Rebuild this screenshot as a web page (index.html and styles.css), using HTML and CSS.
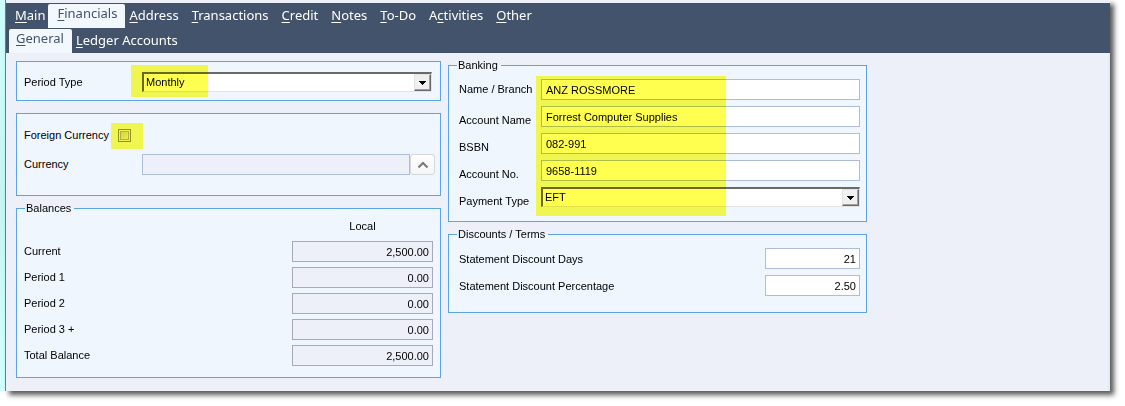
FILE: index.html
```html
<!DOCTYPE html>
<html lang="en">
<head>
    <meta charset="utf-8">
    <title>Financials</title>
    <link rel="stylesheet" href="styles.css">
</head>
<body>
    <div class="window">
        <nav class="tabs" aria-label="Sections">
            <a href="#main"><u>M</u>ain</a>
            <a href="#financials" class="active" aria-current="page"><u>F</u>inancials</a>
            <a href="#address"><u>A</u>ddress</a>
            <a href="#transactions"><u>T</u>ransactions</a>
            <a href="#credit"><u>C</u>redit</a>
            <a href="#notes"><u>N</u>otes</a>
            <a href="#todo"><u>T</u>o-Do</a>
            <a href="#activities">A<u>c</u>tivities</a>
            <a href="#other"><u>O</u>ther</a>
        </nav>
        <nav class="tabs subtabs" aria-label="Financials">
            <a href="#general" class="active" aria-current="page"><u>G</u>eneral</a>
            <a href="#ledger"><u>L</u>edger Accounts</a>
        </nav>

        <form class="content">
            <div class="column">
                <div class="panel period">
                    <div class="row">
                        <label for="period-type">Period Type</label>
                        <div class="dropdown">
                            <select id="period-type">
                                <option>Monthly</option>
                            </select>
                            <span class="drop-button">
                                <svg width="7" height="4" viewBox="0 0 7 4"><path d="M0 0h7v1H6v1H5v1H4v1H3V3H2V2H1V1H0z"/></svg>
                            </span>
                        </div>
                    </div>
                    <span class="highlight"></span>
                </div>

                <div class="panel currency">
                    <div class="row check-row">
                        <label for="foreign">Foreign Currency</label>
                        <span class="check">
                            <input type="checkbox" id="foreign">
                            <span class="highlight"></span>
                        </span>
                    </div>
                    <div class="row">
                        <label for="currency">Currency</label>
                        <input type="text" id="currency" class="readonly" readonly>
                        <button type="button" class="lookup" aria-label="Choose currency">
                            <svg width="12" height="8" viewBox="0 0 12 8"><path d="M1.5 6.5 6 2l4.5 4.5"/></svg>
                        </button>
                    </div>
                </div>

                <fieldset class="panel balances">
                    <legend>Balances</legend>
                    <div class="heading">Local</div>
                    <div class="row">
                        <label for="current">Current</label>
                        <input type="text" id="current" class="readonly" value="2,500.00" readonly>
                    </div>
                    <div class="row">
                        <label for="period1">Period 1</label>
                        <input type="text" id="period1" class="readonly" value="0.00" readonly>
                    </div>
                    <div class="row">
                        <label for="period2">Period 2</label>
                        <input type="text" id="period2" class="readonly" value="0.00" readonly>
                    </div>
                    <div class="row">
                        <label for="period3">Period 3 +</label>
                        <input type="text" id="period3" class="readonly" value="0.00" readonly>
                    </div>
                    <div class="row">
                        <label for="total">Total Balance</label>
                        <input type="text" id="total" class="readonly" value="2,500.00" readonly>
                    </div>
                </fieldset>
            </div>

            <div class="column column-right">
                <fieldset class="panel banking">
                    <legend>Banking</legend>
                    <div class="row">
                        <label for="branch">Name / Branch</label>
                        <input type="text" id="branch" value="ANZ ROSSMORE">
                    </div>
                    <div class="row low">
                        <label for="account-name">Account Name</label>
                        <input type="text" id="account-name" value="Forrest Computer Supplies">
                    </div>
                    <div class="row low">
                        <label for="bsbn">BSBN</label>
                        <input type="text" id="bsbn" value="082-991">
                    </div>
                    <div class="row low">
                        <label for="account-no">Account No.</label>
                        <input type="text" id="account-no" value="9658-1119">
                    </div>
                    <div class="row low">
                        <label for="payment-type">Payment Type</label>
                        <div class="dropdown">
                            <select id="payment-type">
                                <option>EFT</option>
                            </select>
                            <span class="drop-button">
                                <svg width="7" height="4" viewBox="0 0 7 4"><path d="M0 0h7v1H6v1H5v1H4v1H3V3H2V2H1V1H0z"/></svg>
                            </span>
                        </div>
                    </div>
                    <span class="highlight"></span>
                </fieldset>

                <fieldset class="panel terms">
                    <legend>Discounts / Terms</legend>
                    <div class="row">
                        <label for="days">Statement Discount Days</label>
                        <input type="text" id="days" value="21">
                    </div>
                    <div class="row">
                        <label for="percentage">Statement Discount Percentage</label>
                        <input type="text" id="percentage" value="2.50">
                    </div>
                </fieldset>
            </div>
        </form>
    </div>
</body>
</html>
```
FILE: styles.css
```css
* {
    box-sizing: border-box;
}
body {
    margin: 0;
    padding: 0 15px 15px 0;
    background: linear-gradient(#d0ffff, #c4f6f4 50%, #d0ffff) no-repeat 0 0 / 5px calc(100% - 15px), #fff;
    font: 11px/13px "Liberation Sans", Arial, sans-serif;
    color: #000;
}
html {
    background: #fff;
}
.window {
    margin-left: 5px;
    padding-top: 3px;
    border-left: 1px solid #75797f;
    background: #edf0f8;
    box-shadow: 4px 4px 5px rgba(0, 0, 0, 0.65);
}

/* tab bars */
.tabs {
    display: flex;
    height: 25px;
    padding: 1px 0 0 3px;
    background: #42536b;
    font: 13px/23px "Noto Sans", "Open Sans", sans-serif;
}
.tabs a {
    padding: 0 7px 0 6px;
    color: #fff;
    text-decoration: none;
}
.tabs u {
    text-underline-offset: 2px;
}
.tabs .active {
    margin: 0 -2px 0 -4px;
    padding: 0 8px 0 9px;
    background: #f3f8fe;
    color: #42536b;
    line-height: 19px;
    border-radius: 2px 2px 0 0;
}
.subtabs a {
    padding: 0 4px;
}
.subtabs .active {
    margin: 0;
    padding: 0 8px 0 7px;
}

/* form */
.content {
    display: grid;
    grid-template-columns: minmax(0, 425px) minmax(0, 419px);
    gap: 7px;
    padding: 8px 10px 13px;
    border-right: 2px solid #dfecf6;
}
.column {
    display: flex;
    flex-direction: column;
}
.column-right {
    gap: 6px;
}
.panel {
    position: relative;
    min-width: 0;
    margin: 0;
    padding: 0 7px;
    border: 1px solid #5ba4e8;
    background: #eff6fe;
}
legend {
    margin-left: 1px;
    padding: 0 3px 0 1px;
}
.row {
    display: flex;
    align-items: center;
}
label {
    flex: none;
}
input[type="text"],
select {
    min-width: 0;
    height: 21px;
    margin: 0;
    padding: 0 4px;
    border: 1px solid #adbdda;
    border-radius: 0;
    background: #fff;
    font: inherit;
    color: #000;
}
input.readonly {
    background: #edf0f8;
}
.dropdown {
    position: relative;
    flex: 1;
}
select {
    display: block;
    width: 100%;
    height: 20px;
    padding: 0 20px 0 2px;
    appearance: none;
    border-width: 2px 1px 1px 2px;
    border-style: solid;
    border-color: #696969 #e3e3e3 #e3e3e3 #696969;
}
.drop-button {
    position: absolute;
    top: 2px;
    right: 1px;
    display: flex;
    align-items: center;
    justify-content: center;
    width: 17px;
    height: 17px;
    border: 1px solid;
    border-color: #e3e3e3 #696969 #696969 #e3e3e3;
    box-shadow: inset -1px -1px #a0a0a0;
    background: #f0f0f0;
    pointer-events: none;
}
.highlight {
    position: absolute;
    background: #ffff50;
    mix-blend-mode: multiply;
    pointer-events: none;
}

.period {
    padding: 10px 8px 8px 7px;
}
.period label,
.currency .row:last-child label {
    width: 118px;
}
.period .highlight {
    left: 114px;
    top: 3px;
    width: 77px;
    height: 32px;
}

.currency {
    margin-top: 12px;
    padding: 15px 5px 20px 7px;
}
.check-row {
    height: 13px;
    margin-bottom: 12px;
}
.check {
    position: relative;
    margin-left: 9px;
}
.check input {
    display: block;
    width: 13px;
    height: 13px;
    margin: 0;
    appearance: none;
    border: 1px solid #8e8f8f;
    background: linear-gradient(135deg, #c9cdd2, #f6f6f6);
    box-shadow: inset 0 0 0 1px #f4f4f4, inset 0 0 0 2px #aeb3b9;
}
.check .highlight {
    left: -7px;
    top: -6px;
    width: 32px;
    height: 26px;
}
.currency input[type="text"] {
    flex: 1;
}
.lookup {
    display: flex;
    align-items: center;
    justify-content: center;
    width: 25px;
    height: 21px;
    padding: 0;
    border: 1px solid #d3d6da;
    border-radius: 3px;
    background: linear-gradient(#fff, #f4f5f7);
}
.lookup path {
    fill: none;
    stroke: #777;
    stroke-width: 2;
}

.balances {
    margin-top: 6px;
    padding: 5px 7px 11px;
}
.balances .heading {
    width: 141px;
    margin: 0 0 8px auto;
    text-align: center;
}
.balances .row {
    justify-content: space-between;
}
.balances .row + .row {
    margin-top: 5px;
}
.balances input[type="text"] {
    width: 141px;
    padding-right: 3px;
    border-color: #a8abb5;
    text-align: right;
}

.banking {
    margin-top: -2px;
    padding: 7px 6px 13px 10px;
}
.banking legend,
.terms legend {
    margin-left: -2px;
}
.banking .row + .row {
    margin-top: 6px;
}
.banking label {
    width: 82px;
}
.banking .low label {
    padding-top: 8px;
}
.banking .dropdown {
    align-self: flex-start;
}
.banking input[type="text"] {
    flex: 1;
}
.banking .highlight {
    left: 87px;
    top: 4px;
    width: 190px;
    height: 140px;
}

.terms {
    padding: 7px 6px 16px 10px;
}
.terms .row {
    justify-content: space-between;
}
.terms .row + .row {
    margin-top: 6px;
}
.terms label {
    padding-top: 2px;
}
.terms input[type="text"] {
    width: 95px;
    padding-right: 3px;
    text-align: right;
}
```
